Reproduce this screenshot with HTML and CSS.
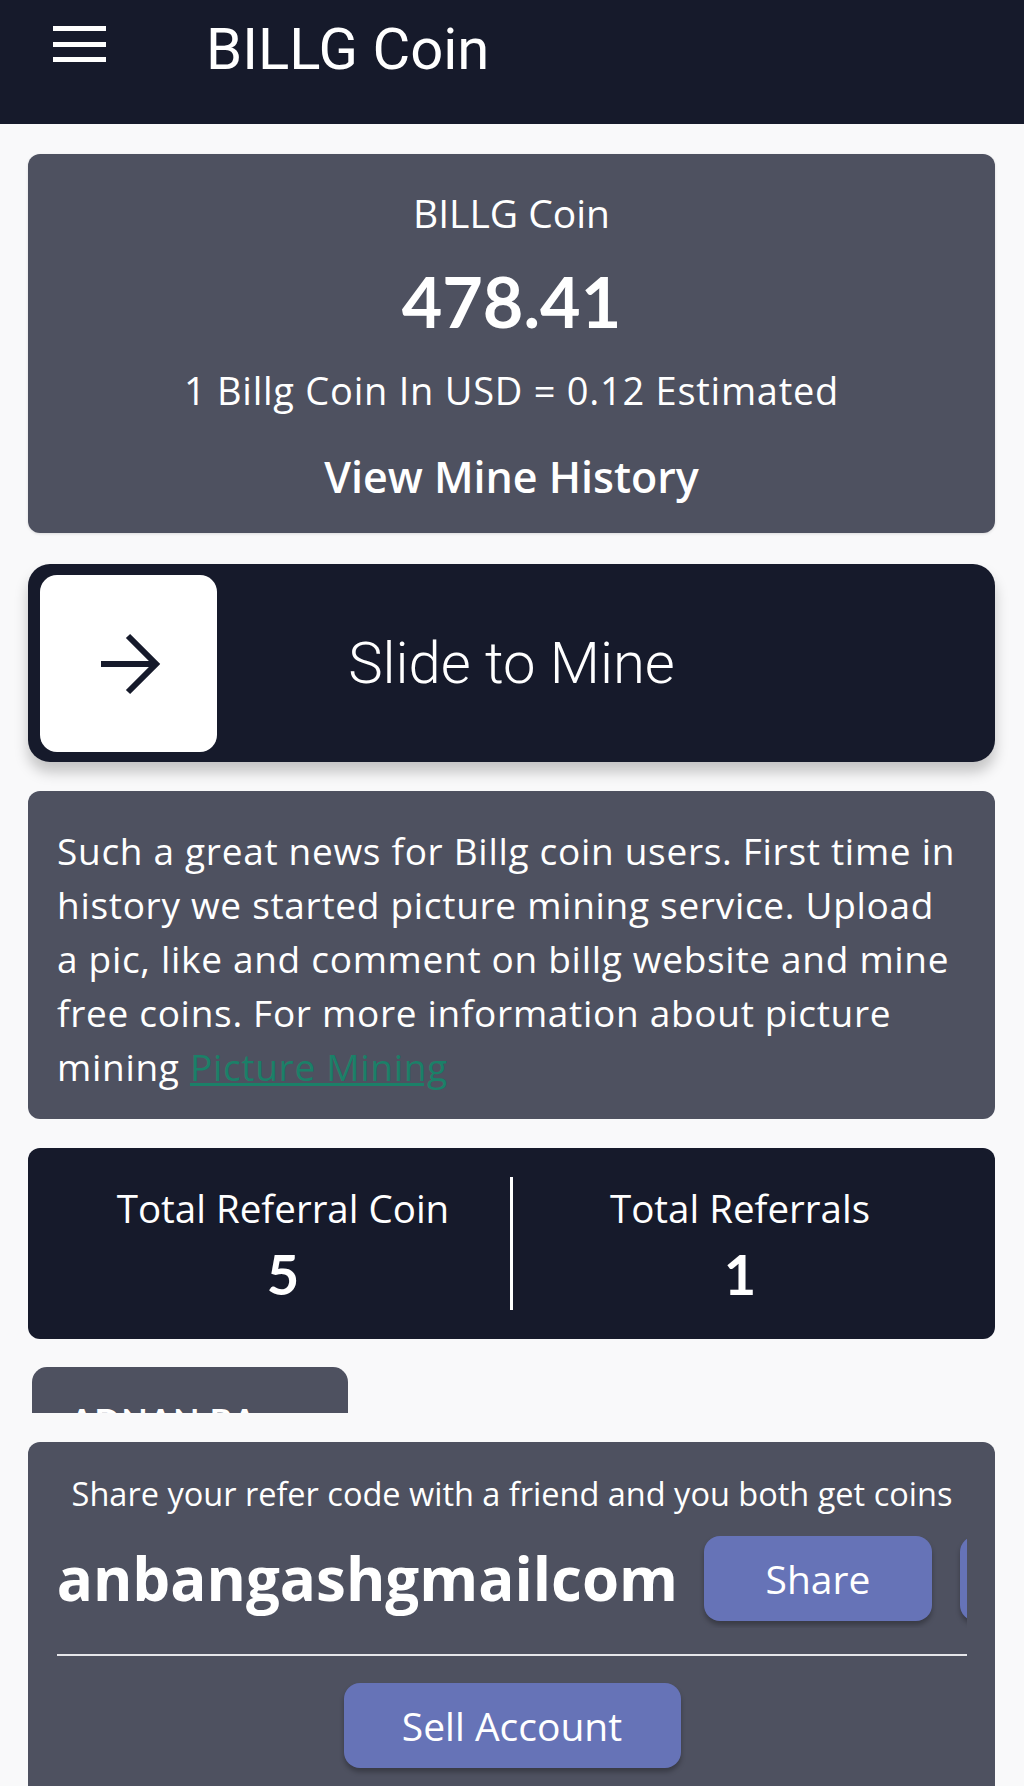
FILE: index.html
```html
<!DOCTYPE html>
<html lang="en">
<head>
<meta charset="utf-8">
<title>BILLG Coin</title>
<link rel="stylesheet" href="styles.css">
</head>
<body>
<header class="topbar">
  <div class="burger"><span></span><span></span><span></span></div>
  <h1 class="brand">BILLG Coin</h1>
</header>
<main class="content">
  <section class="card balance">
    <div class="bal-title">BILLG Coin</div>
    <div class="bal-amount">478.41</div>
    <div class="bal-rate">1 Billg Coin In USD = 0.12 Estimated</div>
    <div class="bal-history">View Mine History</div>
  </section>

  <section class="slider">
    <div class="knob">
      <svg width="64" height="64" viewBox="0 0 64 64" aria-hidden="true">
        <path d="M4 32 H59 M31 4 L59 32 L31 60" fill="none" stroke="#161a2b" stroke-width="6" stroke-linejoin="miter"/>
      </svg>
    </div>
    <span class="slider-text">Slide to Mine</span>
  </section>

  <section class="card news">
    <p>Such a great news for Billg coin users. First time in history we started picture mining service. Upload a pic, like and comment on billg website and mine free coins. For more information about picture mining <a href="#" class="news-link">Picture Mining</a></p>
  </section>

  <section class="card referral">
    <div class="ref-col">
      <div class="ref-label">Total Referral Coin</div>
      <div class="ref-value">5</div>
    </div>
    <div class="ref-divider"></div>
    <div class="ref-col">
      <div class="ref-label">Total Referrals</div>
      <div class="ref-value">1</div>
    </div>
  </section>

  <div class="tab-strip">
    <div class="tab-card">ADNAN BANGASH</div>
  </div>

  <section class="card share">
    <div class="share-note">Share your refer code with a friend and you both get coins</div>
    <div class="share-row">
      <span class="share-code">adnanbangashgmailcom</span>
      <button class="btn btn-share">Share</button>
      <button class="btn btn-share">Copy</button>
    </div>
    <hr class="share-rule">
    <div class="sell-wrap"><button class="btn btn-sell">Sell Account</button></div>
  </section>
</main>
</body>
</html>
```

FILE: styles.css
```css
* { box-sizing: border-box; }
html, body { margin: 0; padding: 0; }
body {
  background: #f9f9fa;
  font-family: "Open Sans", "Noto Sans", sans-serif;
  color: #ffffff;
  height: 1786px;
  overflow: hidden;
}

.topbar {
  height: 124px;
  background: #161a2b;
  display: flex;
  align-items: flex-start;
  padding: 21px 0 0 53px;
}
.burger {
  width: 53px;
  margin-top: 5px;
  display: flex;
  flex-direction: column;
  gap: 10.5px;
}
.burger span {
  display: block;
  height: 5px;
  background: #ffffff;
}
.brand {
  margin: 0 0 0 100px;
  font-family: "Roboto", sans-serif;
  font-weight: 400;
  font-size: 58px;
  line-height: 56px;
  color: #ffffff;
}

.content {
  padding: 30px 29px 0 28px;
  display: flex;
  flex-direction: column;
}

.card {
  background: #4e5160;
  border-radius: 12px;
}

.balance {
  text-align: center;
  padding: 15px 0 13px;
  box-shadow: 0 1px 3px rgba(0,0,0,0.12);
}
.bal-title { font-size: 39px; line-height: 88px; }
.bal-amount { font-family: "Lato", sans-serif; font-size: 70px; font-weight: 700; line-height: 89px; }
.bal-rate { font-size: 38px; line-height: 88px; letter-spacing: 0.75px; }
.bal-history { font-size: 43px; font-weight: 600; line-height: 86px; }

.slider {
  position: relative;
  margin-top: 31px;
  height: 198px;
  background: #161a2b;
  border-radius: 22px;
  box-shadow: 0 10px 14px rgba(0,0,0,0.22);
  display: flex;
  align-items: center;
  justify-content: center;
}
.knob {
  position: absolute;
  left: 12px;
  top: 11px;
  width: 177px;
  height: 177px;
  background: #ffffff;
  border-radius: 17px;
  display: flex;
  align-items: center;
  justify-content: center;
}
.slider-text {
  font-family: "Roboto", sans-serif;
  font-weight: 300;
  font-size: 58px;
  line-height: 1;
  color: #ffffff;
}

.news {
  margin-top: 29px;
  padding: 33px 36px 25px 29px;
}
.news p {
  margin: 0;
  font-size: 37px;
  line-height: 54px;
  letter-spacing: 0.7px;
}
.news-link {
  color: #1b8068;
  text-decoration: underline;
}

.referral {
  margin-top: 29px;
  background: #161a2b;
  padding: 29px 28px;
  display: grid;
  grid-template-columns: 1fr 3px 1fr;
  align-items: center;
}
.ref-col { text-align: center; }
.ref-label { font-size: 38.5px; line-height: 60px; }
.ref-value { font-family: "Lato", sans-serif; font-size: 56px; font-weight: 700; line-height: 72px; }
.ref-divider {
  width: 3px;
  height: 133px;
  background: #ffffff;
}

.tab-strip {
  margin-top: 28px;
  margin-left: 4px;
  height: 46px;
  overflow: hidden;
}
.tab-card {
  width: 316px;
  height: 90px;
  background: #4e5160;
  border-radius: 15px 15px 0 0;
  padding: 34px 88px 0 38px;
  font-family: "Lato", sans-serif;
  font-size: 34px;
  font-weight: 700;
  line-height: 40px;
  letter-spacing: 1px;
  word-break: break-all;
}

.share {
  margin-top: 29px;
  padding: 23px 28px 60px 29px;
  border-radius: 12px 12px 0 0;
  height: 420px;
}
.share-note {
  text-align: center;
  font-size: 32.5px;
  line-height: 58px;
}
.share-row {
  margin-top: 13px;
  display: flex;
  align-items: center;
  overflow: hidden;
  height: 92px;
  padding-bottom: 7px;
}
.share-code {
  flex: none;
  margin-left: -114px;
  margin-right: 26px;
  font-size: 60px;
  font-weight: 700;
  line-height: 85px;
  white-space: nowrap;
}
.btn {
  font-family: "Open Sans", "Noto Sans", sans-serif;
  color: #ffffff;
  background: #6673b7;
  border: none;
  border-radius: 16px;
  box-shadow: 0 4px 5px rgba(0,0,0,0.28);
}
.btn-share {
  flex: none;
  width: 228px;
  height: 85px;
  margin-right: 28px;
  font-size: 39px;
}
.share-rule {
  margin: 26px 0 0;
  border: none;
  height: 2px;
  background: #e6e6ea;
}
.sell-wrap {
  margin-top: 27px;
  display: flex;
  justify-content: center;
}
.btn-sell {
  width: 337px;
  height: 85px;
  font-size: 39px;
}
```
